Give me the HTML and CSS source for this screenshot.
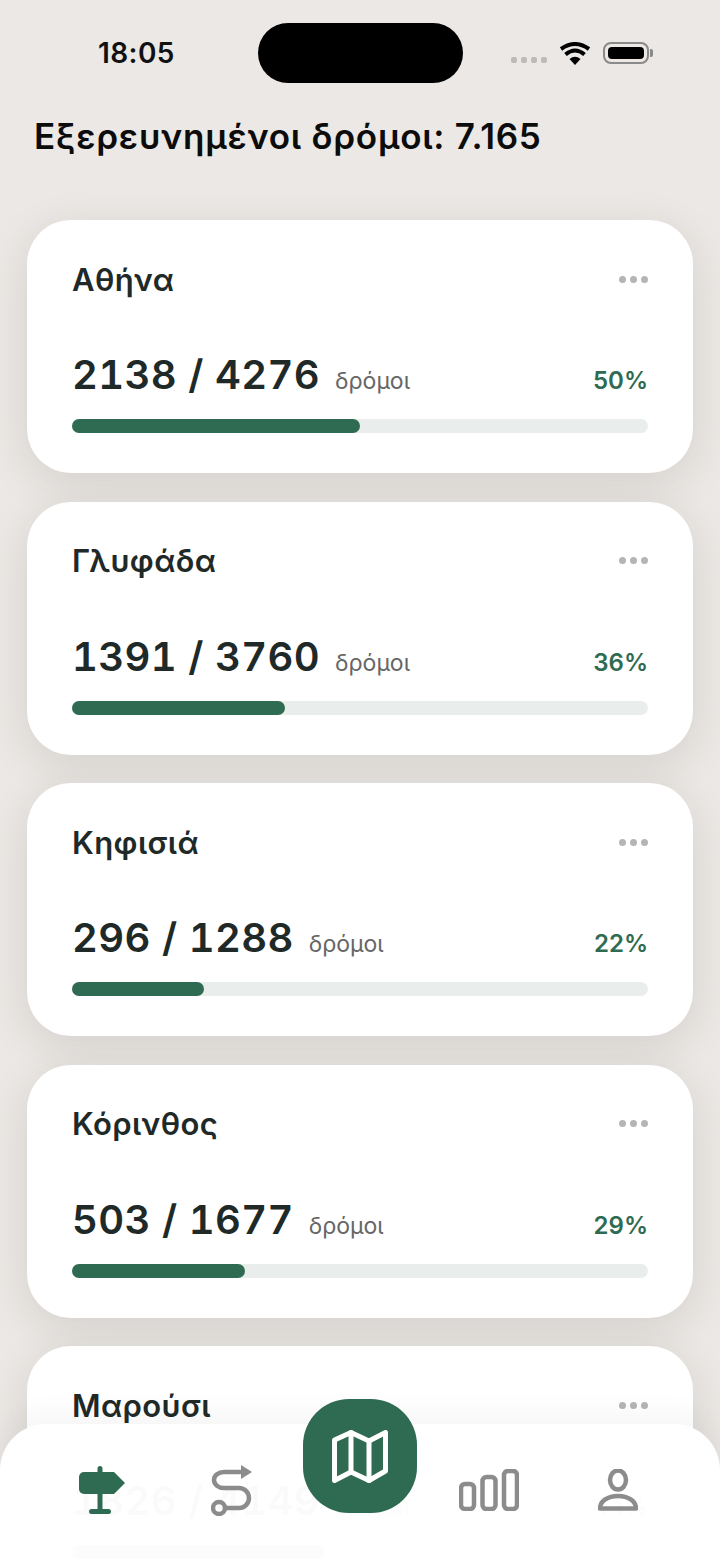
FILE: index.html
```html
<!DOCTYPE html>
<html lang="el">
  <head>
    <meta charset="UTF-8" />
    <meta name="viewport" content="width=device-width, initial-scale=1.0" />
    <title>Εξερευνημένοι δρόμοι</title>
    <link rel="stylesheet" href="styles.css">
  </head>
  <body>
    <div class="screen">
      <header class="status-bar">
        <span class="time">18:05</span>
        <span class="island"></span>
        <span class="signal"><i></i><i></i><i></i><i></i></span>
        <svg class="wifi" viewBox="0 0 32 23" width="32" height="23">
          <path d="M16 23 L10.5 17 Q16 12.5 21.500 17 Z" fill="#000" />
          <path d="M6.500 12.500 Q16 4.500 25.500 12.500" class="wifi-arc" />
          <path d="M2 7 Q16 -3 30 7" class="wifi-arc" />
        </svg>
        <span class="battery"><span class="battery-level"></span></span>
      </header>

      <h1>Εξερευνημένοι δρόμοι: 7.165</h1>

      <main class="cards">
        <section class="card">
          <div class="card-top">
            <h2>Αθήνα</h2>
            <span class="dots"><i></i><i></i><i></i></span>
          </div>
          <div class="card-stats">
            <span class="count">2138 / 4276</span>
            <span class="unit">δρόμοι</span>
            <span class="percent">50%</span>
          </div>
          <div class="bar"><div class="bar-fill" style="width: 50%"></div></div>
        </section>

        <section class="card">
          <div class="card-top">
            <h2>Γλυφάδα</h2>
            <span class="dots"><i></i><i></i><i></i></span>
          </div>
          <div class="card-stats">
            <span class="count">1391 / 3760</span>
            <span class="unit">δρόμοι</span>
            <span class="percent">36%</span>
          </div>
          <div class="bar"><div class="bar-fill" style="width: 37%"></div></div>
        </section>

        <section class="card">
          <div class="card-top">
            <h2>Κηφισιά</h2>
            <span class="dots"><i></i><i></i><i></i></span>
          </div>
          <div class="card-stats">
            <span class="count">296 / 1288</span>
            <span class="unit">δρόμοι</span>
            <span class="percent">22%</span>
          </div>
          <div class="bar"><div class="bar-fill" style="width: 23%"></div></div>
        </section>

        <section class="card">
          <div class="card-top">
            <h2>Κόρινθος</h2>
            <span class="dots"><i></i><i></i><i></i></span>
          </div>
          <div class="card-stats">
            <span class="count">503 / 1677</span>
            <span class="unit">δρόμοι</span>
            <span class="percent">29%</span>
          </div>
          <div class="bar"><div class="bar-fill" style="width: 30%"></div></div>
        </section>

        <section class="card">
          <div class="card-top">
            <h2>Μαρούσι</h2>
            <span class="dots"><i></i><i></i><i></i></span>
          </div>
          <div class="card-stats">
            <span class="count">1826 / 4149</span>
            <span class="unit">δρόμοι</span>
            <span class="percent">44%</span>
          </div>
          <div class="bar"><div class="bar-fill" style="width: 44%"></div></div>
        </section>
      </main>

      <nav class="tabbar">
        <a class="tab tab-sign">
          <svg viewBox="0 0 46 48" width="46" height="48">
            <path d="M5 6 H35 L46 17 L35 28 H5 a5 5 0 0 1 -5 -5 V11 a5 5 0 0 1 5 -5 Z" fill="#2f6b52" />
            <rect x="18.500" y="0" width="5" height="46" rx="2.500" fill="#2f6b52" />
            <rect x="10" y="43" width="22" height="5" rx="2.500" fill="#2f6b52" />
          </svg>
        </a>
        <a class="tab tab-route">
          <svg viewBox="0 0 41 51" width="41" height="51">
            <circle cx="8" cy="43" r="6" class="icon-line" />
            <path d="M14 43 H28 a10 10 0 0 0 0 -20 H13 a10 8 0 0 1 0 -16 H31" class="icon-line" />
            <path d="M30 0 L41 7 L30 14 Z" fill="#8c8c8c" />
          </svg>
        </a>
        <a class="tab tab-main">
          <svg viewBox="0 0 56 53" width="56" height="53">
            <path d="M2.500 10 L19 2.500 L37 11 L53.500 2.500 V41 L37 50.500 L19 42 L2.500 50.500 Z" class="map-line" />
            <path d="M19 2.500 V42 M37 11 V50.500" class="map-line" />
          </svg>
        </a>
        <a class="tab">
          <svg viewBox="0 0 60 42" width="60" height="42">
            <rect x="2" y="15" width="13" height="25" rx="4" class="icon-line" />
            <rect x="23.500" y="8" width="13" height="32" rx="4" class="icon-line" />
            <rect x="45" y="2" width="13" height="38" rx="4" class="icon-line" />
          </svg>
        </a>
        <a class="tab">
          <svg viewBox="0 0 40 42" width="40" height="42">
            <ellipse cx="20" cy="11" rx="8" ry="9.500" class="icon-line" />
            <path d="M2 39.500 H38 C38 32 30 27 20 27 S2 32 2 39.500 Z" class="icon-line" />
          </svg>
        </a>
      </nav>
    </div>
  </body>
</html>
```

FILE: styles.css
```css
:root {
  --green: #2f6b52;
  --ink: #1f2a28;
  --page: #ebe8e5;
  --grey-icon: #8c8c8c;
}

html,
body {
  margin: 0;
  padding: 0;
}

body {
  font-family: Inter, "Noto Sans", sans-serif;
  background-color: var(--page);
  color: var(--ink);
}

.screen {
  position: relative;
  width: 720px;
  height: 1564px;
  overflow: hidden;
  background-color: var(--page);
}

/* status bar */
.status-bar {
  display: flex;
  align-items: center;
  height: 60px;
  padding: 23px 0 0 98px;
}

.time {
  width: 160px;
  font-size: 28px;
  font-weight: 600;
  letter-spacing: 0.4px;
  color: #111;
}

.island {
  width: 205px;
  height: 60px;
  border-radius: 30px;
  background-color: #000;
}

.signal {
  display: flex;
  gap: 4px;
  margin: 14px 0 0 48px;
}

.signal i {
  width: 6px;
  height: 6px;
  border-radius: 2px;
  background-color: #bdbbb9;
}

.wifi {
  margin: 0 0 0 12px;
}

.wifi-arc {
  fill: none;
  stroke: #000;
  stroke-width: 4px;
  stroke-linecap: butt;
}

.battery {
  position: relative;
  box-sizing: border-box;
  width: 46px;
  height: 22px;
  margin-left: 12px;
  padding: 3px;
  border: 2px solid #8a8a8a;
  border-radius: 8px;
}

.battery::after {
  content: "";
  position: absolute;
  right: -6px;
  top: 5px;
  width: 3px;
  height: 8px;
  border-radius: 0 2px 2px 0;
  background-color: #8a8a8a;
}

.battery-level {
  display: block;
  height: 100%;
  border-radius: 4px;
  background-color: #000;
}

h1 {
  margin: 31px 0 0 34px;
  font-size: 35px;
  line-height: 44px;
  font-weight: 600;
  letter-spacing: 0.75px;
  color: #0c0c0c;
}

/* cards */
.cards {
  display: flex;
  flex-direction: column;
  gap: 28.500px;
  margin: 62px 27px 0;
}

.card {
  flex: none;
  box-sizing: border-box;
  height: 253px;
  padding: 38px 45px 0;
  border-radius: 44px;
  background-color: #fff;
  box-shadow: 0 10px 44px rgba(50, 40, 35, 0.12);
}

.card-top {
  display: flex;
  justify-content: space-between;
  align-items: center;
  height: 42px;
}

h2 {
  margin: 0;
  font-size: 31px;
  font-weight: 600;
  letter-spacing: 0.4px;
  color: var(--ink);
}

.dots {
  display: flex;
  gap: 4px;
}

.dots i {
  width: 7px;
  height: 7px;
  border-radius: 50%;
  background-color: #b5b5b5;
}

.card-stats {
  display: flex;
  align-items: baseline;
  margin-top: 51px;
  height: 48px;
}

.count {
  font-size: 40px;
  font-weight: 600;
  line-height: 48px;
  font-variant-numeric: tabular-nums;
  letter-spacing: 0.4px;
}

.unit {
  margin-left: 15px;
  font-size: 23px;
  color: #666;
}

.percent {
  margin-left: auto;
  font-size: 24px;
  font-weight: 600;
  color: var(--green);
}

.bar {
  height: 14px;
  margin-top: 20px;
  border-radius: 7px;
  background-color: #e9eeec;
}

.bar-fill {
  height: 100%;
  border-radius: 7px;
  background-color: var(--green);
}

/* bottom navigation */
.tabbar {
  position: absolute;
  left: 0;
  right: 0;
  bottom: 0;
  display: grid;
  grid-template-columns: repeat(5, 1fr);
  box-sizing: border-box;
  height: 140px;
  padding: 0 38px;
  border-radius: 46px 46px 0 0;
  background-color: rgba(255, 255, 255, 0.98);
  box-shadow: 0 -8px 30px rgba(50, 40, 35, 0.05);
}

.tab {
  display: flex;
  justify-content: center;
  align-items: flex-end;
  height: 87px;
}

.tab-sign svg {
  margin-bottom: -3px;
}

.tab-route svg {
  margin-bottom: -5px;
}

.tab-main {
  align-self: start;
  justify-self: center;
  align-items: center;
  width: 114px;
  height: 114px;
  margin-top: -25px;
  border-radius: 46px;
  background-color: var(--green);
}

.icon-line {
  fill: none;
  stroke: var(--grey-icon);
  stroke-width: 4.500px;
  stroke-linecap: round;
  stroke-linejoin: round;
}

.map-line {
  fill: none;
  stroke: #fff;
  stroke-width: 5px;
  stroke-linejoin: round;
  stroke-linecap: round;
}
```
